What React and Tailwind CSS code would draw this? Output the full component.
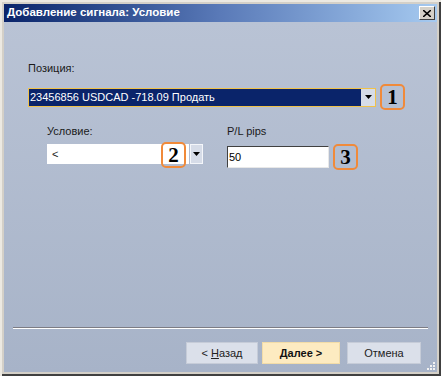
import React from 'react';

const font = { fontFamily: '"Liberation Sans", Arial, sans-serif' };

function Badge({ n }) {
  return (
    <div className="w-[25px] h-[26px] border-2 border-[#f08a3a] rounded-[5px] flex items-center justify-center text-[21px] font-bold leading-none text-black shrink-0"
      style={{ fontFamily: '"Liberation Serif", "Times New Roman", serif' }}>
      {n}
    </div>
  );
}

function Arrow() {
  return (
    <svg width="7" height="4" viewBox="0 0 7 4"><path d="M0 0h7L3.5 4z" fill="#000" /></svg>
  );
}

export default function App() {
  return (
    <div className="w-[441px] h-[376px] bg-[#d4d0c8] border-l-2 border-t-2 border-[#ece9e2] flex flex-col" style={font}>
      <div className="flex-1 flex flex-col border-r-2 border-b-2 border-[#404040] p-[2px]">
        {/* Title bar */}
        <div className="h-[18px] flex items-center justify-between pl-[3px] pr-[2px] bg-gradient-to-r from-[#0a246a] via-[#5a7ab8] to-[#a6caf0]">
          <span className="text-white font-bold text-[11.5px] leading-none">Добавление сигнала: Условие</span>
          <div className="w-[16px] h-[14px] bg-[#d4d0c8] border border-t-white border-l-white border-r-[#404040] border-b-[#404040] flex items-center justify-center">
            <svg width="8" height="7" viewBox="0 0 8 7"><path d="M0 0L8 7M8 0L0 7" stroke="#000" strokeWidth="1.6" /></svg>
          </div>
        </div>

        {/* Body */}
        <div className="flex-1 flex flex-col bg-gradient-to-b from-[#b9c3d5] to-[#a7b3c8] text-[11px] text-[#1a1a1a] relative">
          <div className="pl-[24px] pt-[41px]">
            <div className="leading-none mb-[10px]">Позиция:</div>
            <div className="flex items-center gap-[4px]">
              <div className="w-[348px] h-[19px] flex border border-[#f0c24a] bg-[#0a246a]">
                <div className="flex-1 text-white leading-[17px] pl-[1px]">23456856 USDCAD -718.09 Продать</div>
                <div className="w-[14px] bg-[#d6dce8] flex items-center justify-center"><Arrow /></div>
              </div>
              <Badge n="1" />
            </div>
          </div>

          <div className="flex pl-[43px] pt-[16px]">
            <div className="w-[180px]">
              <div className="leading-none mb-[7px]">Условие:</div>
              <div className="flex items-center w-[156px] relative">
                <div className="flex-1 h-[20px] bg-white leading-[20px] pl-[5px]">&lt;</div>
                <div className="w-[13px] h-[20px] ml-[1px] bg-[#d6dce8] border border-[#f4f6fa] flex items-center justify-center"><Arrow /></div>
                <div className="absolute left-[114px] top-[-2px]"><Badge n="2" /></div>
              </div>
            </div>
            <div>
              <div className="leading-none mb-[7px]">P/L pips</div>
              <div className="flex items-center gap-[4px]">
                <div className="w-[102px] h-[22px] bg-white border border-t-[#404040] border-l-[#404040] border-r-[#e8e8e8] border-b-[#e8e8e8] leading-[20px] pl-[1px] text-black">50</div>
                <Badge n="3" />
              </div>
            </div>
          </div>

          <div className="flex-1" />

          <div className="mx-[9px] border-t border-[#7c7c84] border-b border-b-white" />

          <div className="flex justify-end gap-[4px] pr-[16px] pt-[13px] pb-[8px]">
            <button className="w-[72px] h-[22px] bg-[#dbe0ea] border border-[#c6ccd8] text-[11px] text-[#222]">
              &lt; <span className="underline">Н</span>азад
            </button>
            <button className="w-[78px] h-[22px] bg-[#fdebc1] border border-[#f2dca8] text-[11px] font-bold text-[#111]">
              <span className="underline">Д</span>алее &gt;
            </button>
            <button className="w-[74px] h-[22px] ml-[3px] bg-[#dbe0ea] border border-[#c6ccd8] text-[11px] text-[#222]">
              Отмена
            </button>
          </div>
          <svg className="absolute right-[1px] bottom-[1px]" width="10" height="10" viewBox="0 0 10 10">
            <g fill="#f2f2f2"><rect x="7" y="1" width="2" height="2" /><rect x="4" y="4" width="2" height="2" /><rect x="7" y="4" width="2" height="2" /><rect x="1" y="7" width="2" height="2" /><rect x="4" y="7" width="2" height="2" /><rect x="7" y="7" width="2" height="2" /></g>
          </svg>
        </div>
      </div>
    </div>
  );
}
